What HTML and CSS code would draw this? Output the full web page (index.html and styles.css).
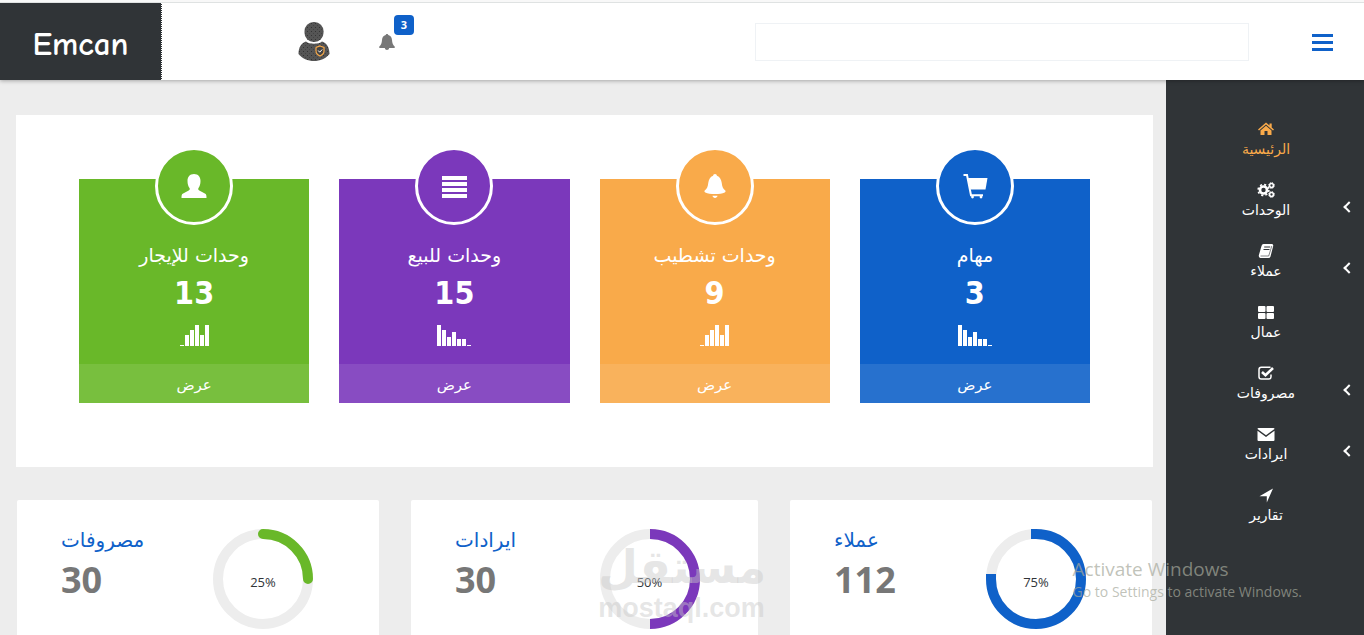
FILE: index.html
```html
<!DOCTYPE html>
<html lang="ar">
<head>
  <meta charset="UTF-8">
  <meta name="viewport" content="width=device-width, initial-scale=1">
  <title>Emcan</title>
  <link rel="stylesheet" href="styles.css">
</head>
<body>
  <!-- header -->
  <header class="topbar">
    <a href="#" class="logo">Emcan</a>
    <button type="button" class="icon-btn user-btn" aria-label="الحساب">
      <svg width="32" height="40" viewBox="0 0 32 40">
        <defs>
          <pattern id="dots" width="4" height="4" patternUnits="userSpaceOnUse">
            <rect width="4" height="4" fill="#555"/>
            <rect x="1" y="1" width="1" height="1" fill="#333"/>
            <rect x="3" y="3" width="1" height="1" fill="#444"/>
          </pattern>
        </defs>
        <rect x="6.500" y="0" width="19" height="20" rx="9" fill="url(#dots)"/>
        <path d="M8 19.500C11 22.500 21 22.500 24 19.500C29 21 31.500 26 31.500 32C28 36.500 22 39 16 39S4 36.500 .5 32C.5 26 3 21 8 19.500z" fill="url(#dots)"/>
        <path d="M22 24l4 1.500v3.500c0 2.500-1.500 4-4 5-2.500-1-4-2.500-4-5v-3.500z" fill="#444" stroke="#f9aa4a" stroke-width="1.200"/>
        <path d="M20.200 28.500l1.500 1.700 2.500-2.700" fill="none" stroke="#fff" stroke-width="1"/>
      </svg>
    </button>
    <button type="button" class="icon-btn bell-btn" aria-label="الإشعارات">
      <svg width="16" height="16" viewBox="0 0 16 16" fill="#777">
        <path d="M8 0c.7 0 1.200.5 1.300 1 2.400.6 3.500 2.400 3.700 5 .2 3 .8 5 2.700 6.500v1.500H.3v-1.500C2.200 11 2.800 9 3 6c.2-2.600 1.300-4.400 3.700-5C6.800.5 7.300 0 8 0z"/>
        <path d="M5.800 14h4.400c-.2 1.300-1 2-2.200 2s-2-.7-2.200-2z"/>
      </svg>
      <span class="badge">3</span>
    </button>
    <input type="search" class="search" aria-label="بحث">
    <button type="button" class="icon-btn menu-btn" aria-label="القائمة">
      <svg width="22" height="18" viewBox="0 0 22 18" fill="#0f61c9">
        <rect y="1" width="21" height="3"/><rect y="8" width="21" height="3"/><rect y="15" width="21" height="3"/>
      </svg>
    </button>
  </header>

  <div class="wrapper">
    <main class="content">
      <!-- cards -->
      <section class="panel">
        <article class="card green">
          <div class="circle">
            <svg width="26" height="26" viewBox="0 0 26 26" fill="#fff">
              <path d="M13 1c4.200 0 6.500 2.800 6.500 7 0 3-.8 5.500-2 7-.6 1.200-.2 2 .8 2.500l6 3.300c1 .6 1.200 1.700 1.200 4.200H.5c0-2.500.2-3.600 1.200-4.200l6-3.300c1-.5 1.400-1.300.8-2.500-1.200-1.500-2-4-2-7 0-4.200 2.300-7 6.500-7z"/>
            </svg>
          </div>
          <h2 dir="rtl">وحدات للإيجار</h2>
          <strong class="number">13</strong>
          <svg class="bars" width="29" height="21" fill="#fff">
            <rect x="0" y="20" width="4" height="1"/><rect x="5" y="10" width="4" height="11"/><rect x="10" y="5" width="4" height="16"/><rect x="15" y="0" width="4" height="21"/><rect x="20" y="10" width="4" height="11"/><rect x="25" y="0" width="4" height="21"/>
          </svg>
          <a href="#" class="card-link">عرض</a>
        </article>
        <article class="card purple">
          <div class="circle">
            <svg width="26" height="26" viewBox="0 0 26 26" fill="#fff">
              <rect x="1" y="3" width="25" height="4"/><rect x="1" y="9" width="25" height="4"/><rect x="1" y="15" width="25" height="4"/><rect x="1" y="21" width="25" height="4"/>
            </svg>
          </div>
          <h2 dir="rtl">وحدات للبيع</h2>
          <strong class="number">15</strong>
          <svg class="bars" width="34" height="21" fill="#fff">
            <rect x="0" y="0" width="4" height="21"/><rect x="5" y="5" width="4" height="16"/><rect x="10" y="12" width="4" height="9"/><rect x="15" y="7" width="4" height="14"/><rect x="20" y="14" width="4" height="7"/><rect x="25" y="14" width="4" height="7"/><rect x="30" y="20" width="4" height="1"/>
          </svg>
          <a href="#" class="card-link">عرض</a>
        </article>
        <article class="card orange">
          <div class="circle">
            <svg width="26" height="26" viewBox="0 0 26 26" fill="#fff">
              <path d="M13 1c1.200 0 1.800.8 1.900 1.800 3 1 4.300 3.800 4.800 7 .5 4 1.300 6 3.300 7.400.9.700.7 1.800-.3 2.200-2.500 1-5.500 1.600-9.700 1.600s-7.200-.6-9.700-1.600c-1-.4-1.200-1.500-.3-2.200 2-1.400 2.800-3.400 3.300-7.400.5-3.200 1.800-6 4.800-7C11.200 1.800 11.800 1 13 1z"/>
              <path d="M10.500 22.800h5c-.3 1.300-1.200 2.200-2.500 2.200s-2.200-.9-2.500-2.200z"/>
            </svg>
          </div>
          <h2 dir="rtl">وحدات تشطيب</h2>
          <strong class="number">9</strong>
          <svg class="bars" width="29" height="21" fill="#fff">
            <rect x="0" y="20" width="4" height="1"/><rect x="5" y="10" width="4" height="11"/><rect x="10" y="5" width="4" height="16"/><rect x="15" y="0" width="4" height="21"/><rect x="20" y="10" width="4" height="11"/><rect x="25" y="0" width="4" height="21"/>
          </svg>
          <a href="#" class="card-link">عرض</a>
        </article>
        <article class="card blue">
          <div class="circle">
            <svg width="26" height="26" viewBox="0 0 26 26">
              <path d="M1.500 2h3.500l4 20.300h12" fill="none" stroke="#fff" stroke-width="2"/>
              <path d="M6 5h19.500l-2 11.500H8.300z" fill="#fff"/>
              <circle cx="10.500" cy="24" r="1.400" fill="#fff"/><circle cx="19" cy="24" r="1.400" fill="#fff"/>
            </svg>
          </div>
          <h2 dir="rtl">مهام</h2>
          <strong class="number">3</strong>
          <svg class="bars" width="34" height="21" fill="#fff">
            <rect x="0" y="0" width="4" height="21"/><rect x="5" y="5" width="4" height="16"/><rect x="10" y="12" width="4" height="9"/><rect x="15" y="7" width="4" height="14"/><rect x="20" y="14" width="4" height="7"/><rect x="25" y="14" width="4" height="7"/><rect x="30" y="20" width="4" height="1"/>
          </svg>
          <a href="#" class="card-link">عرض</a>
        </article>
      </section>

      <!-- percentages -->
      <section class="stats">
        <article class="stat">
          <div class="stat-text">
            <h3>مصروفات</h3>
            <strong>30</strong>
          </div>
          <div class="stat-chart">
            <svg width="100" height="100" viewBox="0 0 100 100" fill="none" stroke-width="10">
              <circle cx="50" cy="50" r="45" stroke="#ededed"/>
              <path d="M50 5A45 45 0 0 1 95 50" stroke="#69b829" stroke-linecap="round"/>
            </svg>
            <span class="percent">25%</span>
          </div>
        </article>
        <article class="stat">
          <div class="stat-text">
            <h3>ايرادات</h3>
            <strong>30</strong>
          </div>
          <div class="stat-chart">
            <svg width="100" height="100" viewBox="0 0 100 100" fill="none" stroke-width="10">
              <circle cx="50" cy="50" r="45" stroke="#ededed"/>
              <path d="M50 5A45 45 0 0 1 50 95" stroke="#7b38bb"/>
            </svg>
            <span class="percent">50%</span>
          </div>
        </article>
        <article class="stat">
          <div class="stat-text">
            <h3>عملاء</h3>
            <strong>112</strong>
          </div>
          <div class="stat-chart">
            <svg width="100" height="100" viewBox="0 0 100 100" fill="none" stroke-width="10">
              <circle cx="50" cy="50" r="45" stroke="#ededed"/>
              <path d="M45 5H50A45 45 0 1 1 5 50V45" stroke="#0f61c9"/>
            </svg>
            <span class="percent">75%</span>
          </div>
        </article>
      </section>
    </main>

    <!-- side menu -->
    <nav class="sidebar">
      <a href="#" class="side-link active">
        <svg width="16" height="16" viewBox="0 0 16 16" fill="currentColor">
          <path d="M8 1.500l3.500 3V2.500h2.200v4L16 8.500l-1 1-7-6-7 6-1-1z"/>
          <path d="M8 4.800l5.500 4.700V14H9.500v-4h-3v4h-4V9.500z"/>
        </svg>
        <span>الرئيسية</span>
      </a>
      <a href="#" class="side-link has-sub">
        <svg width="18" height="16" viewBox="0 0 18 16" fill="none" stroke="currentColor">
          <circle cx="6.500" cy="8" r="3.500" stroke-width="2.600"/>
          <circle cx="6.500" cy="8" r="5.400" stroke-width="1.600" stroke-dasharray="2.100 2.140"/>
          <circle cx="14.500" cy="3.500" r="1.900" stroke-width="1.500"/>
          <circle cx="14.500" cy="3.500" r="2.900" stroke-width="1" stroke-dasharray="1.200 1.077"/>
          <circle cx="14.500" cy="12.500" r="1.900" stroke-width="1.500"/>
          <circle cx="14.500" cy="12.500" r="2.900" stroke-width="1" stroke-dasharray="1.200 1.077"/>
        </svg>
        <span>الوحدات</span>
      </a>
      <a href="#" class="side-link has-sub">
        <svg width="16" height="16" viewBox="0 0 16 16">
          <path d="M5.500 1H14q1.500.3 1.200 2L12.500 13.500Q12 15 10.500 15H2.300Q.3 14.500.9 12L3.500 3Q4 1 5.500 1z" fill="currentColor"/>
          <path d="M6.200 4h6M5.500 6.500h6" fill="none" stroke="#303437"/>
          <path d="M2.500 13h8.200L13.800 3" fill="none" stroke="#303437" stroke-width=".6"/>
        </svg>
        <span>عملاء</span>
      </a>
      <a href="#" class="side-link">
        <svg width="16" height="16" viewBox="0 0 16 16" fill="currentColor">
          <rect x="0" y="2" width="7.500" height="6" rx="1"/><rect x="8.500" y="2" width="7.500" height="6" rx="1"/><rect x="0" y="9" width="7.500" height="6" rx="1"/><rect x="8.500" y="9" width="7.500" height="6" rx="1"/>
        </svg>
        <span>عمال</span>
      </a>
      <a href="#" class="side-link has-sub">
        <svg width="16" height="16" viewBox="0 0 16 16" fill="none" stroke="currentColor">
          <path d="M12.500 2.200H3.300Q1 2.200 1 4.500v7.200Q1 14 3.300 14h7.400q2.300 0 2.300-2.300V9.500" stroke-width="1.500"/>
          <path d="M4 7l3.500 3.300L15 3" stroke-width="2.600"/>
        </svg>
        <span>مصروفات</span>
      </a>
      <a href="#" class="side-link has-sub">
        <svg width="18" height="16" viewBox="0 0 18 16" fill="currentColor">
          <path d="M1.500 2h15q1 0 1 1L9 9.300.500 3q0-1 1-1z"/>
          <path d="M.5 4.800L9 11l8.500-6.200V14q0 1-1 1h-15q-1 0-1-1z"/>
        </svg>
        <span>ايرادات</span>
      </a>
      <a href="#" class="side-link">
        <svg width="16" height="16" viewBox="0 0 16 16" fill="currentColor">
          <path d="M15 1.500L8.800 15.500V9.200H1.500z"/>
        </svg>
        <span>تقارير</span>
      </a>
    </nav>
  </div>

  <div class="watermark">
    <span class="watermark-ar">مستقل</span>
    <span class="watermark-en">mostaql.com</span>
  </div>

  <div class="activate">
    <p class="activate-title">Activate Windows</p>
    <p>Go to Settings to activate Windows.</p>
  </div>
</body>
</html>
```
FILE: styles.css
```css
* {
  box-sizing: border-box;
}
html, body {
  height: 100%;
  margin: 0;
}
body {
  display: flex;
  flex-direction: column;
  position: relative;
  overflow: hidden;
  background: #ededed;
  font-family: "Open Sans", "DejaVu Sans", sans-serif;
  color: #303437;
}
a {
  color: inherit;
  text-decoration: none;
}
h2, h3, p {
  margin: 0;
  font-weight: normal;
}
svg {
  display: block;
}

/* header */
.topbar {
  display: flex;
  align-items: center;
  position: relative;
  z-index: 1;
  flex: none;
  height: 78px;
  margin-top: 2px;
  padding-right: 30px;
  background: #fff;
  border-top: 1px solid #dfe2e2;
  box-shadow: 0 -2px 0 #f8f8f8, 0 1px 4px rgba(0, 0, 0, 0.3);
}
.logo {
  display: flex;
  align-items: center;
  justify-content: center;
  align-self: stretch;
  width: 162px;
  padding-top: 4px;
  background: #303437;
  border-right: 1px dotted #fff;
  color: #fff;
  font-family: "Comic Sans MS", "Comic Neue", "DejaVu Sans Condensed", sans-serif;
  font-size: 33px;
  font-weight: bold;
}
.icon-btn {
  position: relative;
  padding: 0;
  border: 0;
  background: none;
}
.user-btn {
  margin-left: 136px;
}
.bell-btn {
  margin-left: 49px;
}
.badge {
  position: absolute;
  top: -19px;
  right: -19px;
  width: 20px;
  height: 20px;
  border-radius: 4px;
  background: #0f61c9;
  color: #fff;
  font-family: "Open Sans", sans-serif;
  font-size: 11px;
  font-weight: bold;
  line-height: 20px;
  text-align: center;
}
.search {
  width: 37%;
  height: 38px;
  margin-left: auto;
  padding: 0 12px;
  border: 1px solid #eff2f5;
  background: #fff;
  font-size: 14px;
}
.menu-btn {
  margin-left: 63px;
}

.wrapper {
  display: flex;
  flex: 1;
  min-height: 0;
}
.content {
  display: flex;
  flex-direction: column;
  flex: 1;
  padding: 35px 13px 0 16px;
}

/* cards */
.panel {
  display: grid;
  grid-template-columns: repeat(4, 1fr);
  gap: 30px;
  padding: 64px 63px;
  background: #fff;
}
.card {
  display: flex;
  flex-direction: column;
  align-items: center;
  color: #fff;
}
.green {
  background: #69b829;
}
.purple {
  background: #7b38bb;
}
.orange {
  background: #f9aa4a;
}
.blue {
  background: #0f61c9;
}
.circle {
  display: flex;
  align-items: center;
  justify-content: center;
  width: 78px;
  height: 78px;
  margin-top: -32px;
  border: 3px solid #fff;
  border-radius: 50%;
  background: inherit;
}
.card h2 {
  margin-top: 16px;
  font-family: "DejaVu Sans", sans-serif;
  font-size: 19px;
  line-height: 28px;
}
.number {
  font-family: "DejaVu Sans Condensed", "DejaVu Sans", sans-serif;
  font-size: 32px;
  line-height: 40px;
  margin-top: 4px;
}
.bars {
  margin: 12px 0 18px;
}
.card-link {
  align-self: stretch;
  height: 39px;
  padding-top: 3px;
  background: rgba(255, 255, 255, 0.1);
  font-family: "DejaVu Sans", sans-serif;
  font-size: 15px;
  line-height: 36px;
  text-align: center;
}

/* percentages */
.stats {
  display: grid;
  flex: 1;
  grid-template-columns: 362fr 347fr 362fr;
  gap: 32px;
  padding: 33px 1px 0;
}
.stat {
  display: grid;
  grid-template-columns: 1fr 1fr;
  border-radius: 2px 2px 0 0;
  background: #fff;
}
.stat-text {
  padding: 24px 0 0 44px;
}
.stat h3 {
  color: #0f61c9;
  font-family: "DejaVu Sans", sans-serif;
  font-size: 20px;
  line-height: 32px;
}
.stat strong {
  display: block;
  color: #777;
  font-size: 36px;
  line-height: 48px;
}
.stat-chart {
  position: relative;
  width: 100px;
  height: 100px;
  margin: 29px 0 0 15px;
}
.percent {
  position: absolute;
  top: 43px;
  left: 0;
  width: 100%;
  font-size: 13px;
  line-height: 20px;
  text-align: center;
}

/* side menu */
.sidebar {
  width: 198px;
  padding: 41px 0 0 2px;
  background: #303437;
  color: #fff;
}
.side-link {
  display: flex;
  flex-direction: column;
  align-items: center;
  gap: 2px;
  position: relative;
  height: 61px;
  font-family: "DejaVu Sans", sans-serif;
  font-size: 14px;
  line-height: 20px;
}
.active {
  color: #f9aa4a;
}
.has-sub::after {
  content: "";
  position: absolute;
  top: 21px;
  right: 11px;
  width: 6px;
  height: 6px;
  border-left: 2px solid #fff;
  border-bottom: 2px solid #fff;
  transform: rotate(45deg);
}

/* overlays */
.watermark {
  position: absolute;
  top: 540px;
  left: 598px;
  z-index: 2;
  width: 167px;
  color: rgba(200, 200, 200, 0.45);
  font-weight: bold;
  text-align: center;
}
.watermark span {
  display: block;
}
.watermark-ar {
  font-family: "DejaVu Sans", sans-serif;
  font-size: 46px;
  line-height: 54px;
}
.watermark-en {
  font-family: "Liberation Sans", sans-serif;
  font-size: 27px;
  line-height: 28px;
}
.activate {
  position: absolute;
  right: 62px;
  bottom: 33px;
  z-index: 2;
  color: rgba(165, 168, 155, 0.7);
  font-size: 14px;
  line-height: 20px;
}
.activate-title {
  font-size: 19px;
  line-height: 26px;
}
```
